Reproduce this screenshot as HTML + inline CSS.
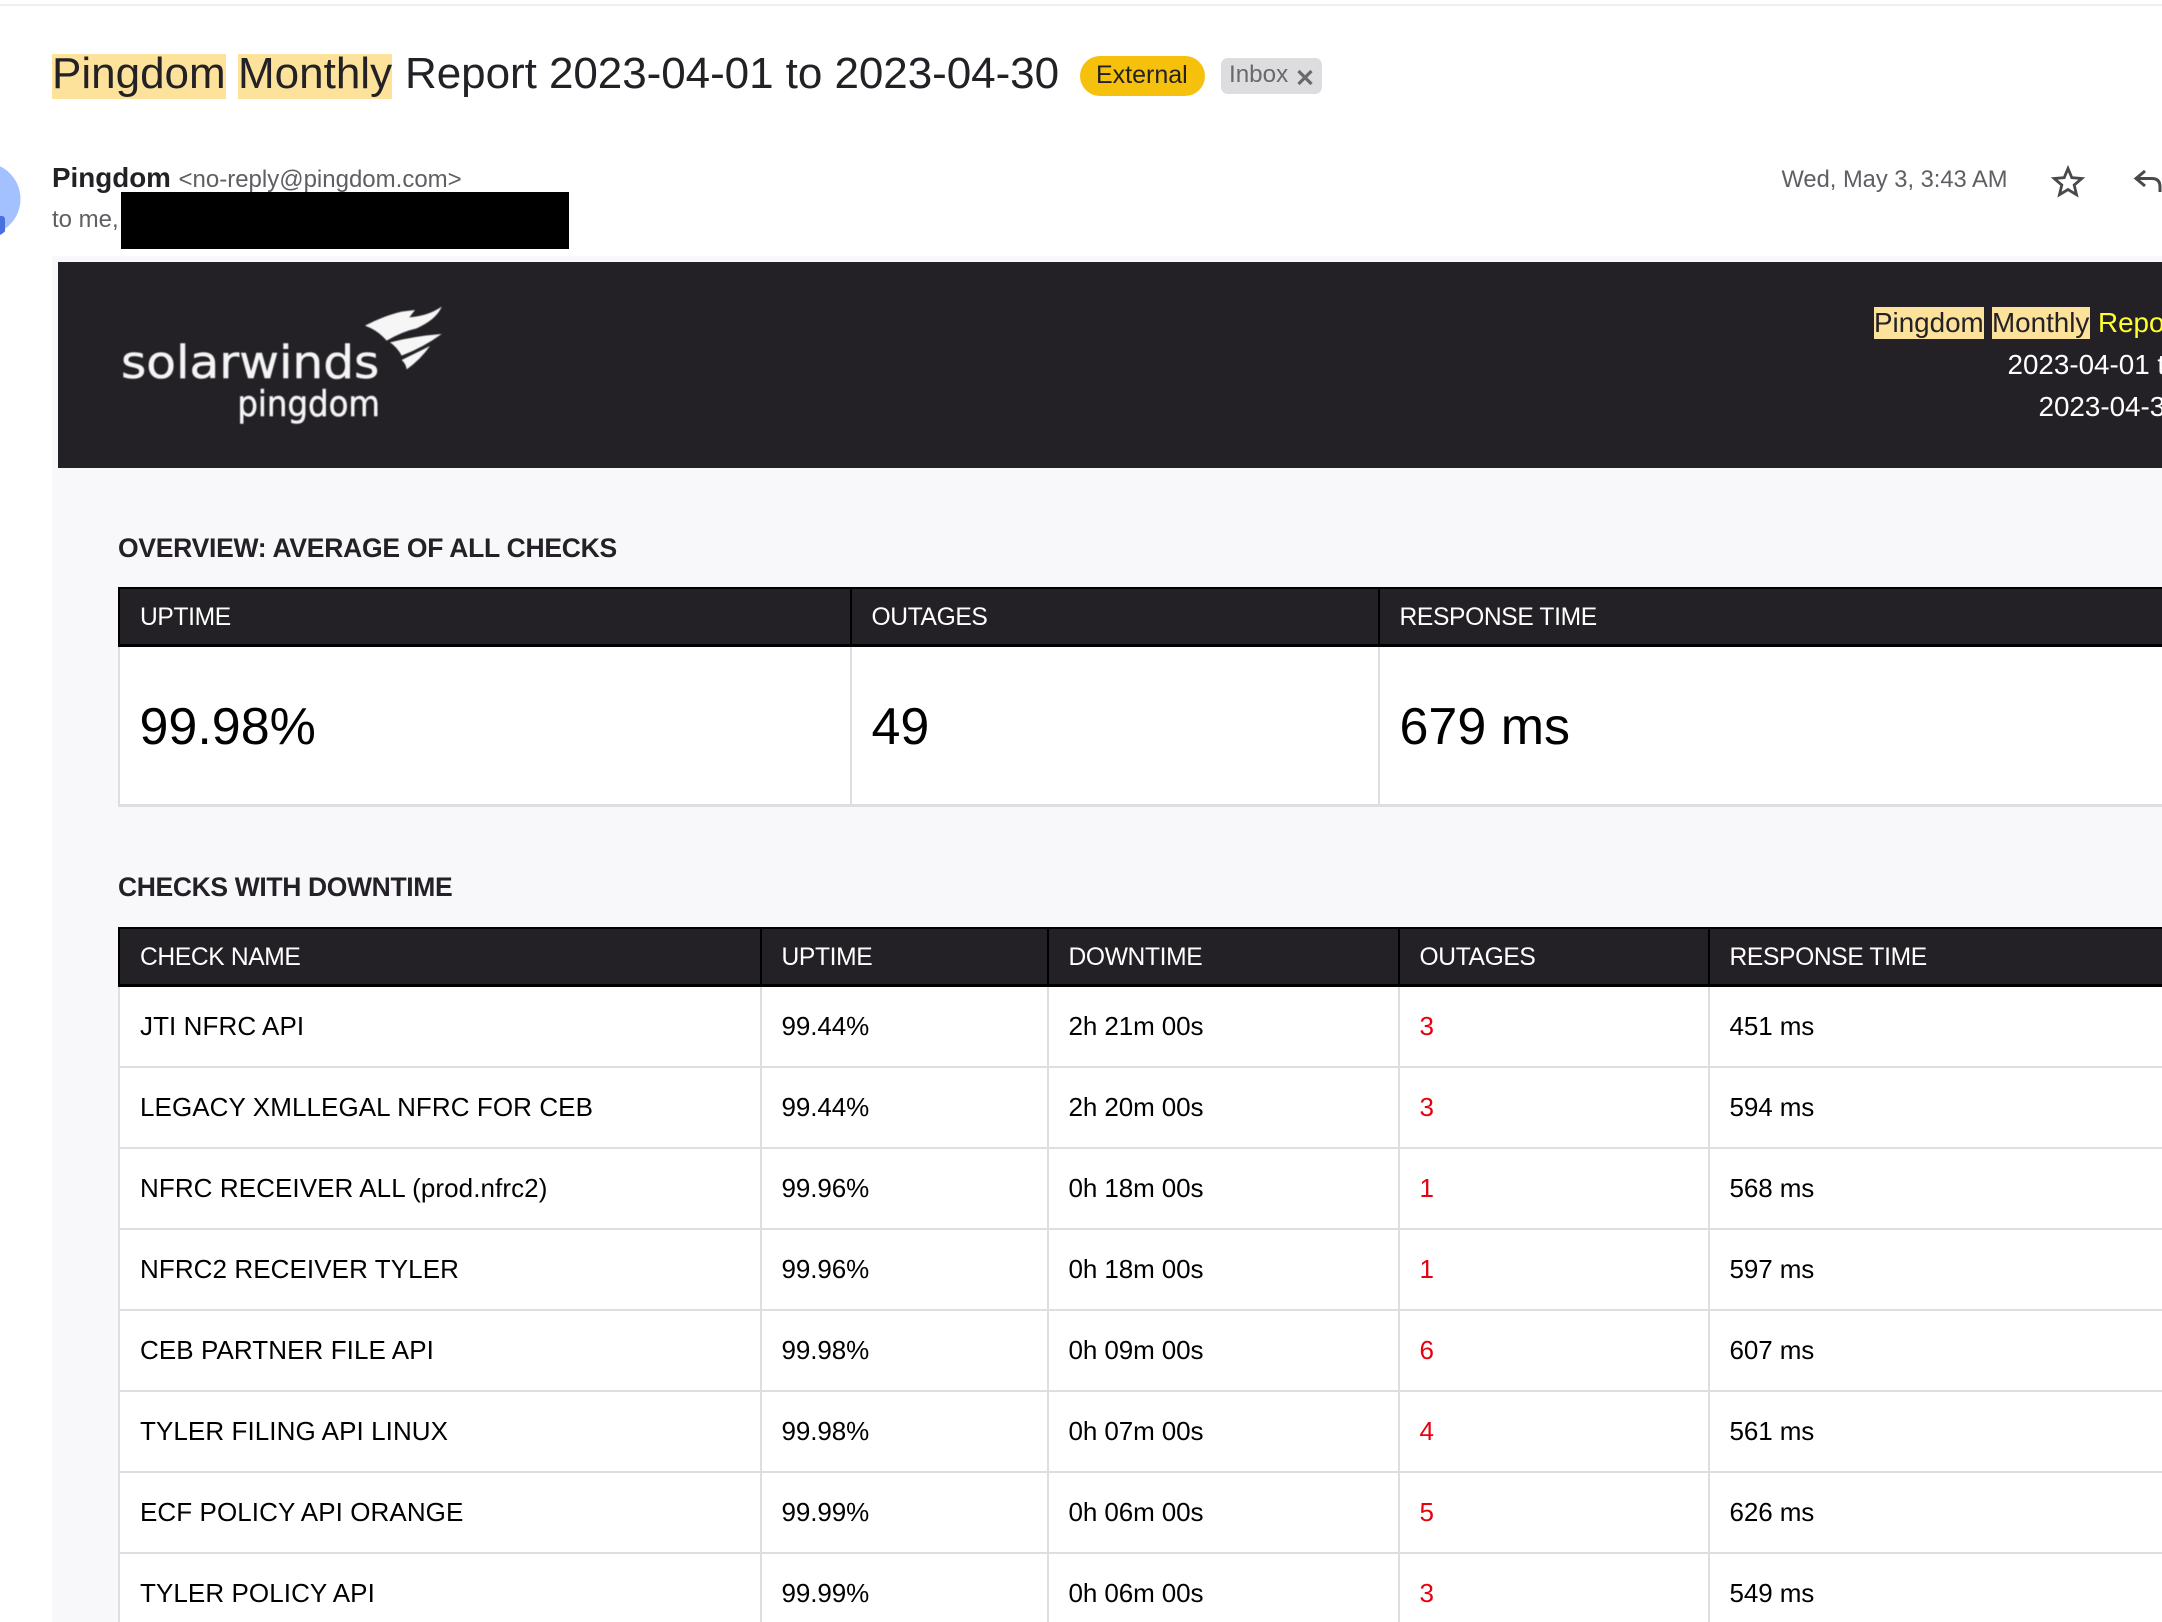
<!DOCTYPE html>
<html lang="en">
<head>
<meta charset="utf-8">
<title>Pingdom Monthly Report</title>
<style>
html,body{margin:0;padding:0;background:#fff;}
#page{position:relative;width:2162px;height:1622px;overflow:hidden;background:#fff;font-family:"Liberation Sans",Arial,sans-serif;color:#232126;}
.a{position:absolute;white-space:nowrap;}
.panel{position:absolute;left:52px;top:256px;width:2110px;height:1366px;background:#f8f7fa;}
.hero{position:absolute;left:58px;top:262px;width:2104px;height:206px;background:#232126;}
table{position:absolute;left:118px;border-collapse:separate;border-spacing:0;table-layout:fixed;background:#fff;}
th,td{box-sizing:border-box;padding:0 0 0 19.5px;text-align:left;white-space:nowrap;overflow:hidden;}
th:first-child,td:first-child{padding-left:20px;}
th{height:60px;padding-top:2px;background:#232126;color:#fff;font-weight:normal;font-size:24.6px;letter-spacing:-.35px;border-top:2px solid #000;border-bottom:3px solid #000;border-right:2px solid #000;}
th:first-child{border-left:2px solid #000;}
td{color:#000;font-size:26px;letter-spacing:-.1px;height:81px;border-right:2px solid #dedee0;border-bottom:2px solid #dedee0;}
td:first-child{border-left:2px solid #dedee0;letter-spacing:.08px;}
.big td,.big td:first-child{height:160px;padding-top:2px;font-size:52px;border-bottom-width:3px;letter-spacing:0;}
.big td:first-child{padding-left:19.5px;}
.r{color:#e8000d;}
</style>
</head>
<body>
<div id="page">
  <div class="a" style="left:0;top:4px;width:2162px;height:2px;background:#f0f0f2"></div>

  <div class="a" style="left:52px;top:54px;width:174px;height:45px;background:#fce29a"></div>
  <div class="a" style="left:238px;top:54px;width:154px;height:45px;background:#fce29a"></div>
  <div class="a" style="left:52px;top:49px;font-size:44px;line-height:50px;color:#232126">Pingdom</div>
  <div class="a" style="left:238px;top:49px;font-size:44px;line-height:50px;color:#232126">Monthly</div>
  <div class="a" style="left:405px;top:49px;font-size:44px;line-height:50px;color:#232126;letter-spacing:-.05px">Report 2023-04-01 to 2023-04-30</div>

  <div class="a" style="left:1080px;top:56px;width:125px;height:40px;border-radius:20px;background:#f5c10d"></div>
  <div class="a" style="left:1096px;top:60px;font-size:25px;line-height:30px;color:#232126">External</div>
  <div class="a" style="left:1221px;top:58px;width:101px;height:36px;border-radius:7px;background:#dddcdf"></div>
  <div class="a" style="left:1229px;top:60px;font-size:24.2px;line-height:30px;color:#6a686c">Inbox</div>
  <svg class="a" style="left:1290px;top:62px" width="30" height="30" viewBox="0 0 30 30"><path d="M8.500 9L21.500 22M21.500 9L8.500 22" stroke="#6a686c" stroke-width="3.200" fill="none"/></svg>

  <svg class="a" style="left:0;top:150px" width="40" height="100" viewBox="0 0 40 100"><circle cx="-16" cy="49" r="36.500" fill="#a4c1ff"/><path d="M0 66H2Q5 66 5 70V81.500Q2 84 0 85Z" fill="#4a6fe0"/></svg>

  <div class="a" style="left:52px;top:162px;font-size:27.800px;line-height:32px;font-weight:bold;color:#232126">Pingdom</div>
  <div class="a" style="left:178.500px;top:165px;font-size:24px;line-height:30px;color:#5f5e63">&lt;no-reply@pingdom.com&gt;</div>
  <div class="a" style="left:52px;top:205px;font-size:24px;line-height:30px;color:#5f5e63">to me,</div>
  <div class="a" style="left:121px;top:192px;width:448px;height:57px;background:#000"></div>

  <div class="a" style="left:1781.500px;top:165px;font-size:23.700px;line-height:30px;color:#5f5e63">Wed, May 3, 3:43 AM</div>
  <svg class="a" style="left:2048px;top:162px" width="40" height="40" viewBox="0 0 40 40"><path d="M20 6.500L23.800 15.700L33.800 16.500L26.200 23L28.500 32.700L20 27.500L11.500 32.700L13.800 23L6.200 16.500L16.200 15.700Z" fill="none" stroke="#49484c" stroke-width="2.800" stroke-linejoin="miter"/></svg>
  <svg class="a" style="left:2130px;top:165px" width="32" height="32" viewBox="0 0 32 32"><path d="M15 6L6 13.500L15 21M6 13.500H22Q30 13.500 30 22V27" fill="none" stroke="#49484c" stroke-width="3"/></svg>

  <div class="panel"></div>
  <div class="hero"></div>

  <svg class="a" style="left:40px;top:260px;filter:blur(.5px)" width="500" height="220" viewBox="0 0 1500 660">
    <text x="243" y="354" font-family="'DejaVu Sans',sans-serif" font-size="136" fill="#f4f4f4" stroke="#f4f4f4" stroke-width="1.500" textLength="775" lengthAdjust="spacingAndGlyphs">solarwinds</text>
    <text x="592" y="468" font-family="'DejaVu Sans',sans-serif" font-size="108" fill="#f4f4f4" stroke="#f4f4f4" stroke-width="1.500" textLength="428" lengthAdjust="spacingAndGlyphs">pingdom</text>
    <path d="M975 197Q1030 168 1085 155L1125 150L1108 172Q1165 168 1205 140Q1190 178 1130 205Q1085 215 1040 242Q1015 212 975 197Z" fill="#f6f6f6"/>
    <path d="M1050 247Q1125 228 1205 222Q1150 262 1085 287Q1072 262 1050 247Z" fill="#f6f6f6"/>
    <path d="M1085 300L1170 258Q1140 300 1100 328Q1098 312 1085 300Z" fill="#f6f6f6"/>
  </svg>

  <div class="a" style="left:1874px;top:307px;width:110px;height:32px;background:#fce29a"></div>
  <div class="a" style="left:1992px;top:307px;width:98px;height:32px;background:#fce29a"></div>
  <div class="a" style="left:1874px;top:303px;font-size:27.800px;line-height:40px;color:#232126">Pingdom</div>
  <div class="a" style="left:1992px;top:303px;font-size:27.800px;line-height:40px;color:#232126">Monthly</div>
  <div class="a" style="left:2098px;top:303px;font-size:27.800px;line-height:40px;color:#ffff2e">Report</div>
  <div class="a" style="left:2007.500px;top:345px;font-size:27.800px;line-height:40px;color:#fff">2023-04-01 to</div>
  <div class="a" style="left:2038.500px;top:387px;font-size:27.800px;line-height:40px;color:#fff">2023-04-30</div>

  <div class="a" style="left:118px;top:532px;font-size:26.500px;line-height:32px;font-weight:bold;color:#232126;letter-spacing:-.26px">OVERVIEW: AVERAGE OF ALL CHECKS</div>
  <table class="big" style="top:587px;width:2400px">
    <colgroup><col style="width:734px"><col style="width:528px"><col style="width:1138px"></colgroup>
    <tr><th>UPTIME</th><th>OUTAGES</th><th>RESPONSE TIME</th></tr>
    <tr><td>99.98%</td><td>49</td><td>679 ms</td></tr>
  </table>

  <div class="a" style="left:118px;top:871px;font-size:26.500px;line-height:32px;font-weight:bold;color:#232126;letter-spacing:-.36px">CHECKS WITH DOWNTIME</div>
  <table style="top:927px;width:2400px">
    <colgroup><col style="width:644px"><col style="width:287px"><col style="width:351px"><col style="width:310px"><col style="width:808px"></colgroup>
    <tr><th>CHECK NAME</th><th>UPTIME</th><th>DOWNTIME</th><th>OUTAGES</th><th>RESPONSE TIME</th></tr>
    <tr><td>JTI NFRC API</td><td>99.44%</td><td>2h 21m 00s</td><td class="r">3</td><td>451 ms</td></tr>
    <tr><td>LEGACY XMLLEGAL NFRC FOR CEB</td><td>99.44%</td><td>2h 20m 00s</td><td class="r">3</td><td>594 ms</td></tr>
    <tr><td>NFRC RECEIVER ALL (prod.nfrc2)</td><td>99.96%</td><td>0h 18m 00s</td><td class="r">1</td><td>568 ms</td></tr>
    <tr><td>NFRC2 RECEIVER TYLER</td><td>99.96%</td><td>0h 18m 00s</td><td class="r">1</td><td>597 ms</td></tr>
    <tr><td>CEB PARTNER FILE API</td><td>99.98%</td><td>0h 09m 00s</td><td class="r">6</td><td>607 ms</td></tr>
    <tr><td>TYLER FILING API LINUX</td><td>99.98%</td><td>0h 07m 00s</td><td class="r">4</td><td>561 ms</td></tr>
    <tr><td>ECF POLICY API ORANGE</td><td>99.99%</td><td>0h 06m 00s</td><td class="r">5</td><td>626 ms</td></tr>
    <tr><td>TYLER POLICY API</td><td>99.99%</td><td>0h 06m 00s</td><td class="r">3</td><td>549 ms</td></tr>
  </table>
</div>
</body>
</html>
